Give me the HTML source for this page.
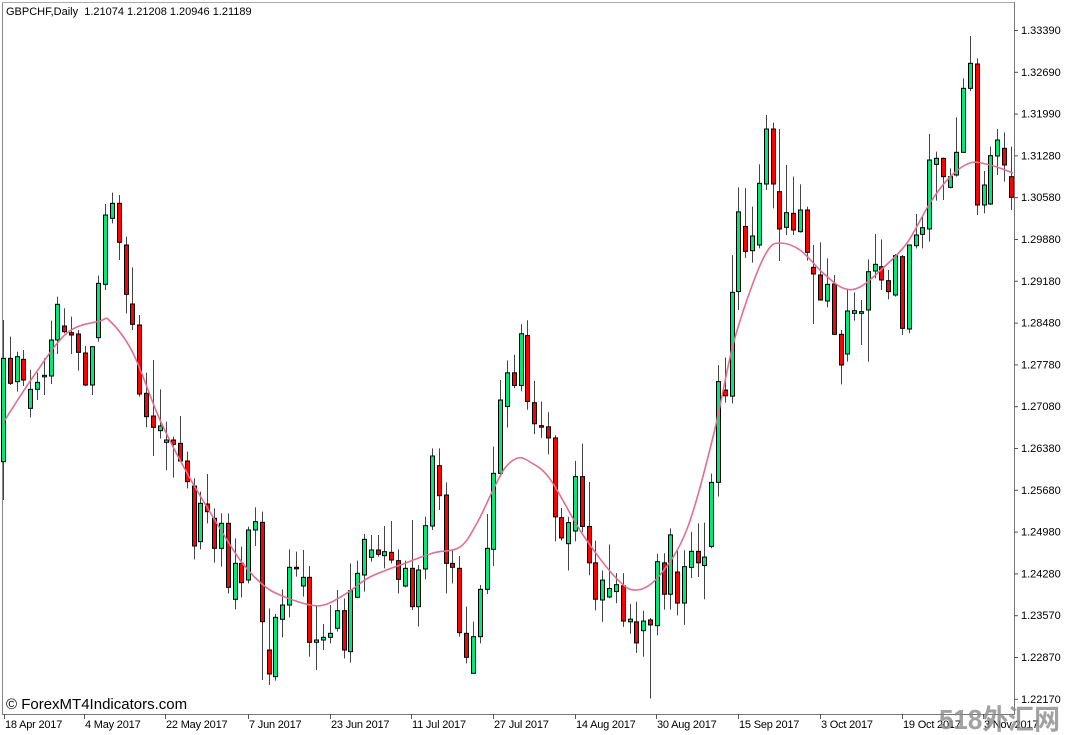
<!DOCTYPE html>
<html><head><meta charset="utf-8"><style>
html,body{margin:0;padding:0;background:#fff;}
body{width:1068px;height:735px;overflow:hidden;position:relative;font-family:"Liberation Sans",Tahoma,sans-serif;}
svg{position:absolute;left:0;top:0}
</style></head><body>
<svg id="s" width="1068" height="735" xmlns="http://www.w3.org/2000/svg">
<rect x="0" y="0" width="1068" height="735" fill="#fff"/>
<line x1="2.5" y1="2" x2="2.5" y2="714" stroke="#888" stroke-width="1"/>
<line x1="2" y1="2.5" x2="1014" y2="2.5" stroke="#aaa" stroke-width="1"/>
<line x1="1014.5" y1="2" x2="1014.5" y2="714" stroke="#777" stroke-width="1"/>
<line x1="2" y1="714.5" x2="1015" y2="714.5" stroke="#777" stroke-width="1"/>
<g id="cd"></g>
<g id="ax" font-family="Liberation Sans, Tahoma, sans-serif" font-size="11" fill="#000"></g>
<text x="6" y="15" font-size="11" fill="#000">GBPCHF,Daily&#160; 1.21074 1.21208 1.20946 1.21189</text>
<text x="6" y="709" font-size="15" fill="#000">© ForexMT4Indicators.com</text>
<text x="939" y="729" font-size="28" font-weight="bold" fill="#8a8a8a" fill-opacity="0.8" textLength="121" lengthAdjust="spacingAndGlyphs" font-family="Liberation Sans, Noto Sans CJK SC, sans-serif">518外汇网</text>
</svg>
<script>
var NS="http://www.w3.org/2000/svg";
function el(t,a,p){var e=document.createElementNS(NS,t);for(var k in a)e.setAttribute(k,a[k]);(p||document.getElementById('cd')).appendChild(e);return e;}
var C=[];
function add(list,off,sc){list.trim().split(/\s*;\s*/).forEach(function(s){if(!s)return;var p=s.trim().split(/\s+/);C.push([p[0]].concat(p.slice(1).map(function(v){return off+(+v)/sc;})));});}
add("g 535 845 420 960;r 535 610 470 615;g 530 605 515 635;r 538 600 510 618;g 628 685 570 712;g 607 628 578 660;g 586 590 535 645;g 480 588 422 612;g 373 480 350 522;r 438 455 385 460;r 458 465 410 522;r 462 517 450 572;r 519 615 498 618;g 500 615 500 645;g 310 473 287 485;g 105 313 72 330;g 70 115 38 130;r 70 187 45 240;r 195 343 170 400;r 372 433 262 450;r 435 642 405 650;r 640 710 578 742;r 708 742 540 828;g 738 752 628 775;g 780 787 725 870;r 780 793 770 893;r 790 843 708 845;r 843 905 815 925;r 918 1098 895 1138;g 970 1085 935 1108;r 972 995 882 1030;r 1015 1105 985 1148;g 1030 1105 1000 1160;r 1030 1222 1000 1240;g 1150 1258 1075 1288;r 1150 1208 1100 1252;g 1050 1200 1040 1210;g 1025 1050 982 1098",180,3);
add("r 637 935 605 1110;r 1020 1092 895 1125;g 922 1100 912 1112;g 885 928 838 982;g 772 885 718 922;r 772 775 725 800;g 802 828 720 860;r 802 997 768 1040;g 990 997 885 1080;g 982 990 942 1020;g 970 982 885 1000;g 902 955 840 965;r 902 1020 865 1045;g 842 1025 760 1058;g 790 862 752 865;g 688 795 672 845;g 720 742 675 755;r 720 733 675 740;g 725 737 648 775;r 727 750 633 760;r 752 808 718 850;g 775 828 752 832;r 775 890 630 900;g 780 890 765 950;g 647 777 620 808;g 438 648 415 660;r 467 557 415 600;r 555 760 517 850;r 760 772 718 820;r 775 968 738 980;r 970 1042 890 1060;g 980 1090 935 1090;g 838 980 825 1000;g 715 838 612 852;g 490 718 410 768;g 270 490 210 500",310,3);
add("g 712 800 680 855;r 712 745 665 752;g 610 745 585 760;r 615 787 575 808;r 790 845 733 872;r 850 853 787 882;r 853 882 815 925;r 882 1088 875 1152;r 1090 1143 1065 1150;g 1103 1158 1088 1228;g 983 1125 942 1152;r 983 1113 897 1128;r 1113 1208 997 1240;r 1208 1303 1150 1332;g 1253 1305 1228 1362;g 1275 1297 1160 1300;g 1265 1283 1235 1313;r 1268 1360 1235 1375;g 1355 1362 1315 1393;r 1362 1417 1310 1443;g 1360 1385 1333 1453;r 1357 1370 1352 1562;g 1205 1372 1185 1397;r 1208 1290 1183 1330;g 1135 1290 1118 1330;r 1232 1313 1175 1345;g 1218 1313 1175 1370;g 1178 1220 1127 1248;r 1178 1208 1105 1245;g 1193 1215 1103 1303;g 998 1165 975 1170;g 735 998 692 1035;r 757 772 672 790;g 502 773 405 792;g 292 500 228 548;r 330 395 230 412",100,2.61);
add("g 618 662 530 698;g 460 645 403 655;g 297 462 255 480;r 297 462 278 535;r 485 597 297 693;g 548 592 405 615;r 550 600 440 615;g 540 605 463 608;r 540 667 530 692;r 712 732 645 882;r 735 810 637 812;g 763 813 685 832;r 762 913 735 915;r 913 1005 900 1063;g 843 972 780 995;g 842 850 787 872;g 845 850 810 945;g 725 840 688 995;g 703 723 612 745;r 710 750 628 780;r 752 785 720 808;g 677 795 672 800;r 680 895 675 915;g 645 897 643 910;g 615 647 552 655;g 593 613 560 655;g 390 597 312 635;g 385 403 365 512;r 385 440 383 510;g 440 472 415 475;g 367 435 262 440;g 175 367 145 368;g 100 175 18 183;r 102 525 85 555;g 465 525 423 550;g 377 522 350 525;g 330 378 297 435;r 355 405 307 455;r 440 502 350 540",30,3);
C.forEach(function(c,i){
  var x=Math.round(3+i*6.81);
  el('line',{x1:x+0.5,y1:c[3],x2:x+0.5,y2:Math.min(c[4],713),stroke:'#444','stroke-width':1});
  var h=Math.max(c[2]-c[1],1.5);
  el('rect',{x:x-1.5,y:c[1],width:4,height:h,fill:c[0]=='g'?'#00e87a':'#f00',stroke:'#000','stroke-width':1});
});
var P=[[3,423],[33,377],[67,333],[100,321],[110,321],[133,353],[160,420],[187,473],[213,517],[240,560],[262,584],[280,595],[310,605],[327,604],[347,593],[370,577],[403,564],[433,553],[460,547],[477,523],[493,490],[505,468],[518,458],[530,462],[550,479],[583,535],[617,579],[637,590],[660,575],[687,529],[713,437],[733,345],[753,283],[768,250],[780,243],[800,250],[823,273],[843,288],[860,287],[883,268],[907,243],[930,203],[950,177],[970,163],[990,165],[1013,173]];
var d="M"+P[0][0]+","+P[0][1];
for(var i=0;i<P.length-1;i++){var p0=P[i-1]||P[i],p1=P[i],p2=P[i+1],p3=P[i+2]||p2;
d+=" C"+(p1[0]+(p2[0]-p0[0])/6)+","+(p1[1]+(p2[1]-p0[1])/6)+" "+(p2[0]-(p3[0]-p1[0])/6)+","+(p2[1]-(p3[1]-p1[1])/6)+" "+p2[0]+","+p2[1];}
el('path',{d:d,fill:'none',stroke:'#e0708f','stroke-width':1.6});
var ax=document.getElementById('ax');
var prices=["1.33390","1.32690","1.31990","1.31280","1.30580","1.29880","1.29180","1.28480","1.27780","1.27080","1.26380","1.25680","1.24980","1.24280","1.23570","1.22870","1.22170"];
prices.forEach(function(p,i){var y=30+i*41.8;
 el('line',{x1:1014,y1:y+0.5,x2:1018,y2:y+0.5,stroke:'#555'},ax);
 var t=el('text',{x:1021,y:y+4},ax);t.textContent=p;});
var dates=[[4,"18 Apr 2017"],[84,"4 May 2017"],[165,"22 May 2017"],[248,"7 Jun 2017"],[330,"23 Jun 2017"],[411,"11 Jul 2017"],[493,"27 Jul 2017"],[575,"14 Aug 2017"],[656,"30 Aug 2017"],[738,"15 Sep 2017"],[820,"3 Oct 2017"],[902,"19 Oct 2017"],[983,"3 Nov 2017"]];
dates.forEach(function(d){el('line',{x1:d[0]+0.5,y1:714,x2:d[0]+0.5,y2:719,stroke:'#555'},ax);
 var t=el('text',{x:d[0]+1,y:728,'letter-spacing':'-0.2'},ax);t.textContent=d[1];});
var s=document.getElementById('s');var ts=s.querySelectorAll(':scope > text');ts.forEach(function(t){s.appendChild(t);});
</script>
</body></html>
